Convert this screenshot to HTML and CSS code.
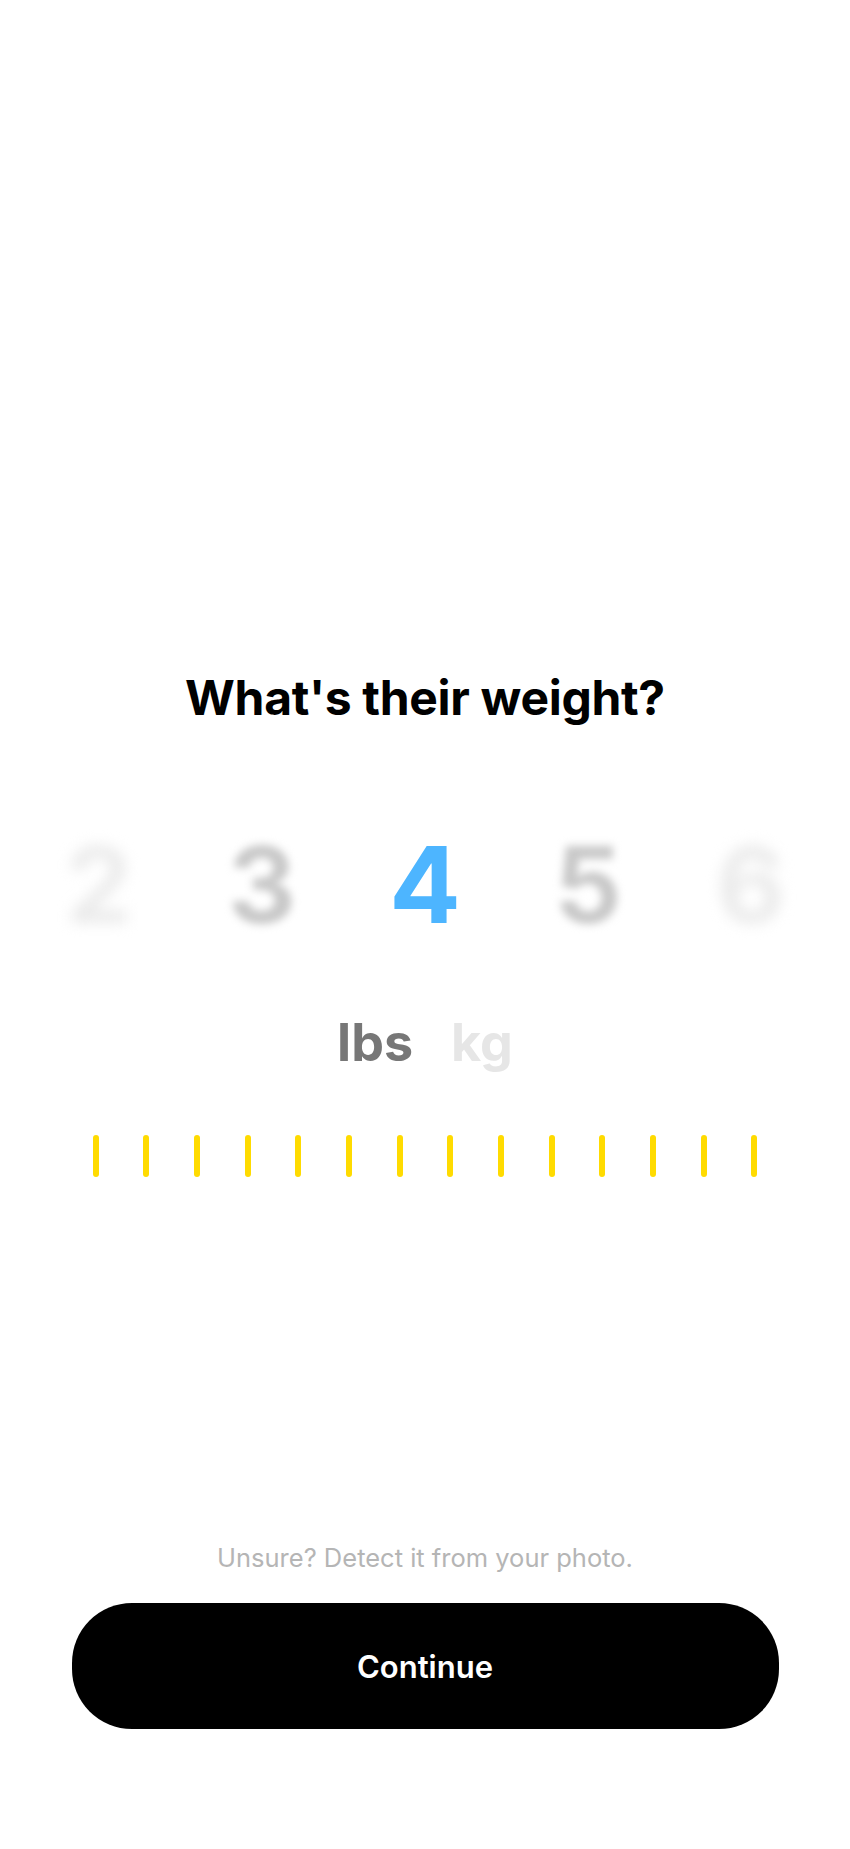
FILE: index.html
```html
<!DOCTYPE html>
<html lang="en">
<head>
    <meta charset="UTF-8">
    <meta name="viewport" content="width=device-width, initial-scale=1.0">
    <title>Weight</title>
    <link rel="stylesheet" href="styles.css">
</head>
<body>
    <div class="page">
        <h1 class="title">What's their weight?</h1>

        <div class="picker">
            <span class="num far">2</span>
            <span class="num near">3</span>
            <span class="num current">4</span>
            <span class="num near">5</span>
            <span class="num far">6</span>
        </div>

        <div class="units">
            <span class="unit active">lbs</span>
            <span class="unit">kg</span>
        </div>

        <div class="ruler">
            <span class="tick"></span><span class="tick"></span><span class="tick"></span><span class="tick"></span>
            <span class="tick"></span><span class="tick"></span><span class="tick"></span><span class="tick"></span>
            <span class="tick"></span><span class="tick"></span><span class="tick"></span><span class="tick"></span>
            <span class="tick"></span><span class="tick"></span>
        </div>

        <div class="bottom">
            <p class="hint">Unsure? Detect it from your photo.</p>
            <button class="continue">Continue</button>
        </div>
    </div>
</body>
</html>
```

FILE: styles.css
```css
body {
    margin: 0;
    background: #ffffff;
    font-family: Inter, "Noto Sans", sans-serif;
}

.page {
    min-height: 1849px;
    display: flex;
    flex-direction: column;
    align-items: center;
    padding-top: 670px;
    box-sizing: border-box;
}

.title {
    margin: 0;
    font-size: 48px;
    line-height: 56px;
    font-weight: 700;
    color: #000;
    letter-spacing: -0.3px;
}

.picker {
    margin-top: 99px;
    width: 815px;
    display: flex;
    justify-content: space-between;
}

.num {
    width: 163px;
    text-align: center;
    font-size: 106px;
    line-height: 120px;
    font-weight: 700;
}

.num.current {
    color: #4db5ff;
}

.num.near {
    color: #c8c8c8;
    filter: blur(4.5px);
}

.num.far {
    color: #ebebeb;
    filter: blur(7px);
}

.units {
    margin-top: 68px;
    display: flex;
    gap: 38px;
}

.unit {
    font-size: 52px;
    line-height: 60px;
    font-weight: 700;
    color: #e6e6e6;
}

.unit.active {
    color: #777777;
}

.ruler {
    margin-top: 62px;
    width: 665px;
    display: flex;
    justify-content: space-between;
}

.tick {
    width: 6px;
    height: 42px;
    border-radius: 3px;
    background: #ffdb00;
}

.bottom {
    margin-top: auto;
    padding-bottom: 120px;
    display: flex;
    flex-direction: column;
    align-items: center;
}

.hint {
    margin: 0 0 30px;
    font-size: 25.5px;
    line-height: 30px;
    color: #b5b5b5;
}

.continue {
    width: 707px;
    height: 126px;
    border: none;
    border-radius: 60px;
    background: #000;
    color: #fff;
    font-family: Inter, "Noto Sans", sans-serif;
    font-size: 31px;
    font-weight: 600;
    cursor: pointer;
}
```
